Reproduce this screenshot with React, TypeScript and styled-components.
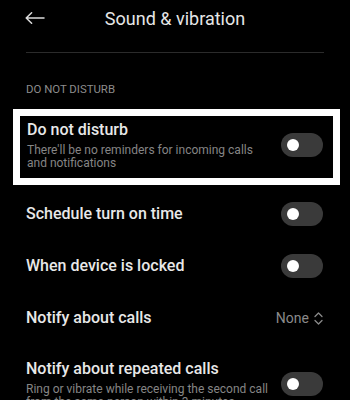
import React from "react";
import styled, { createGlobalStyle } from "styled-components";

const Global = createGlobalStyle`
  html, body { margin: 0; padding: 0; background: #000; }
  body { font-family: Roboto, "Noto Sans", sans-serif; color: #ececec; width: 350px; height: 400px; overflow: hidden; }
  * { box-sizing: border-box; }
`;

const Page = styled.div`
  width: 350px;
  height: 400px;
  overflow: hidden;
  background: #000;
  display: flex;
  flex-direction: column;
  & > * { flex-shrink: 0; }
`;

const Header = styled.div`
  height: 36px;
  padding: 0 25px;
  display: grid;
  grid-template-columns: 24px 1fr 24px;
  align-items: center;
`;

const Title = styled.div`
  text-align: center;
  font-size: 18px;
  font-weight: 400;
  color: #e6e6e6;
`;

const Divider = styled.div`
  height: 1px;
  background: #2b2b2b;
  margin: 16px 26px 0;
`;

const SectionLabel = styled.div`
  margin: 30px 26px 0;
  font-size: 11.4px;
  line-height: 13px;
  color: #8c8c8c;
`;

const Highlight = styled.div`
  margin: 13px 10px 0 13px;
  border: 7px solid #fff;
  background: #000;
`;

const Row = styled.div<{ $h: number; $pl?: number; $pr?: number; $pb?: number; $mt?: number }>`
  height: ${(p) => p.$h}px;
  margin-top: ${(p) => p.$mt ?? 0}px;
  padding: 0 ${(p) => p.$pr ?? 27}px ${(p) => p.$pb ?? 0}px ${(p) => p.$pl ?? 26}px;
  display: flex;
  align-items: center;
  justify-content: space-between;
  gap: 12px;
`;

const TopRow = styled.div`
  padding: 15px 27px 0 26px;
  display: flex;
  align-items: flex-start;
  justify-content: space-between;
  gap: 12px;
`;

const TextCol = styled.div`
  display: flex;
  flex-direction: column;
  min-width: 0;
`;

const RowTitle = styled.div`
  font-size: 16px;
  line-height: 20px;
  font-weight: 500;
  color: #e8e8e8;
`;

const RowSub = styled.div`
  font-size: 12px;
  line-height: 13px;
  color: #858585;
  margin-top: 4px;
  white-space: nowrap;
`;

const Toggle = styled.div<{ $mt?: number }>`
  width: 42px;
  height: 24px;
  margin-top: ${(p) => p.$mt ?? 0}px;
  border-radius: 12px;
  background: #3a3a3a;
  flex-shrink: 0;
  display: flex;
  align-items: center;
  padding-left: 6px;
`;

const Knob = styled.div`
  width: 12px;
  height: 12px;
  border-radius: 50%;
  background: #fff;
`;

const Value = styled.div`
  display: flex;
  align-items: center;
  gap: 5px;
  font-size: 14px;
  color: #8a8a8a;
`;

const Switch = ({ mt }: { mt?: number }) => (
  <Toggle $mt={mt}>
    <Knob />
  </Toggle>
);

export default function App() {
  return (
    <Page>
      <Global />
      <Header>
        <svg width="20" height="12" viewBox="0 0 20 12" fill="none">
          <path d="M19 6H1.2M6.6 0.8L1.2 6l5.4 5.2" stroke="#dcdcdc" strokeWidth="1.5" strokeLinecap="round" strokeLinejoin="round" />
        </svg>
        <Title>Sound &amp; vibration</Title>
        <span />
      </Header>
      <Divider />
      <SectionLabel>DO NOT DISTURB</SectionLabel>
      <Highlight>
        <Row $h={62} $pl={7} $pr={10} $pb={4}>
          <TextCol>
            <RowTitle>Do not disturb</RowTitle>
            <RowSub>There'll be no reminders for incoming calls<br />and notifications</RowSub>
          </TextCol>
          <Switch />
        </Row>
      </Highlight>
      <Row $h={52} $mt={3}>
        <RowTitle>Schedule turn on time</RowTitle>
        <Switch />
      </Row>
      <Row $h={52}>
        <RowTitle>When device is locked</RowTitle>
        <Switch />
      </Row>
      <Row $h={52}>
        <RowTitle>Notify about calls</RowTitle>
        <Value>
          None
          <svg width="9" height="13" viewBox="0 0 9 13" fill="none">
            <path d="M1 4.5L4.5 1L8 4.5M1 8.5L4.5 12L8 8.5" stroke="#8a8a8a" strokeWidth="1.3" strokeLinecap="round" strokeLinejoin="round" />
          </svg>
        </Value>
      </Row>
      <TopRow>
        <TextCol>
          <RowTitle>Notify about repeated calls</RowTitle>
          <RowSub>Ring or vibrate while receiving the second call<br />from the same person within 3 minutes</RowSub>
        </TextCol>
        <Switch mt={13} />
      </TopRow>
    </Page>
  );
}
